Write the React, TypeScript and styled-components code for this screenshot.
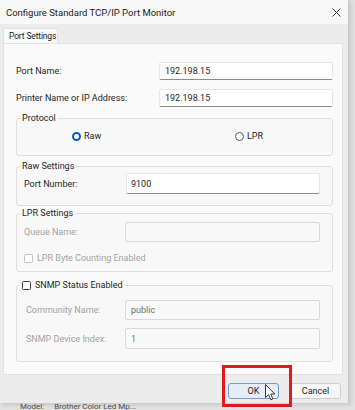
import React from 'react';
import styled, { createGlobalStyle } from 'styled-components';

const Global = createGlobalStyle`
  html, body { margin: 0; padding: 0; }
  body {
    background: #dedede;
    font-family: Roboto, "Liberation Sans", sans-serif;
    -webkit-font-smoothing: antialiased;
  }
`;

const Screen = styled.div`
  position: relative;
  width: 355px;
  height: 410px;
  overflow: hidden;
  background: #e2e2e2;
`;

const Dialog = styled.div`
  width: 349px;
  height: 403px;
  box-sizing: border-box;
  background: #ececec;
  border-right: 1px solid #c8c8c8;
  box-shadow: 2px 2px 4px rgba(0, 0, 0, 0.12);
  display: flex;
  flex-direction: column;
`;

const TitleBar = styled.div`
  height: 24px;
  flex: none;
  display: flex;
  align-items: center;
  justify-content: space-between;
  padding: 0 7px 0 6px;
  background: #f8f8f8;
  font-size: 9.5px;
  color: #1b1b1b;
`;

const CloseIcon = styled.svg`
  width: 9px;
  height: 9px;
  display: block;
`;

const Body = styled.div`
  flex: 1;
  display: flex;
  flex-direction: column;
  padding: 4px 5px 0 3px;
`;

const TabStrip = styled.div`
  height: 15px;
  flex: none;
  display: flex;
`;

const Tab = styled.div`
  width: 55px;
  box-sizing: border-box;
  background: #f9f9f9;
  border: 1px solid #e2e2e2;
  border-bottom: none;
  font-size: 8.5px;
  letter-spacing: -0.15px;
  white-space: nowrap;
  color: #1b1b1b;
  padding-left: 5px;
  display: flex;
  align-items: center;
`;

const Panel = styled.div`
  height: 332px;
  flex: none;
  box-sizing: border-box;
  background: #fafafa;
  border: 1px solid #e2e2e2;
  padding: 18px 9px 0 12px;
  display: flex;
  flex-direction: column;
`;

const Row = styled.div<{ $mt?: number; $indent?: number }>`
  display: flex;
  align-items: center;
  margin-top: ${(p) => p.$mt ?? 0}px;
  padding-left: ${(p) => p.$indent ?? 0}px;
`;

const Label = styled.span<{ $w: number; $disabled?: boolean }>`
  width: ${(p) => p.$w}px;
  flex: none;
  font-size: 9px;
  white-space: nowrap;
  color: ${(p) => (p.$disabled ? '#a3a3a3' : '#1e1e1e')};
`;

const Field = styled.div<{ $w: number; $h: number; $disabled?: boolean; $pad?: number }>`
  width: ${(p) => p.$w}px;
  height: ${(p) => p.$h}px;
  box-sizing: border-box;
  background: ${(p) => (p.$disabled ? '#f9f9f9' : '#ffffff')};
  border: 1px solid ${(p) => (p.$disabled ? '#d9d9d9' : '#e6e6e6')};
  border-bottom: 1px solid ${(p) => (p.$disabled ? '#d9d9d9' : '#8c8c8c')};
  border-radius: 2px;
  padding-left: ${(p) => p.$pad ?? 5}px;
  display: flex;
  align-items: center;
  font-size: 9px;
  color: ${(p) => (p.$disabled ? '#6f6f6f' : '#1e1e1e')};
`;

const Group = styled.fieldset<{ $mt: number; $pt: number; $pb: number }>`
  margin: ${(p) => p.$mt}px 0 0 0;
  padding: ${(p) => p.$pt}px 12px ${(p) => p.$pb}px 7px;
  border: 1px solid #dfdfdf;
  border-radius: 3px;
  background: #f8f8f8;
  min-width: 0;
`;

const Legend = styled.legend`
  margin-left: -4px;
  padding: 0 2px;
  font-size: 9px;
  line-height: 12px;
  color: #1e1e1e;
  display: flex;
  align-items: center;
  gap: 4px;
`;

const RadioRow = styled.div`
  display: grid;
  grid-template-columns: 163px 1fr;
  padding-left: 48px;
  height: 12px;
  align-items: center;
`;

const RadioOption = styled.div`
  display: flex;
  align-items: center;
  gap: 3px;
  font-size: 9px;
  color: #1e1e1e;
`;

const RadioDot = styled.span<{ $on?: boolean }>`
  width: 9px;
  height: 9px;
  box-sizing: border-box;
  border-radius: 50%;
  background: ${(p) => (p.$on ? '#ffffff' : '#fafafa')};
  border: ${(p) => (p.$on ? '2.5px solid #0a5cb8' : '1px solid #5a5a5a')};
`;

const CheckRow = styled.div<{ $mt?: number; $disabled?: boolean }>`
  display: flex;
  align-items: center;
  gap: 4px;
  margin-top: ${(p) => p.$mt ?? 0}px;
  height: 12px;
  font-size: 9px;
  color: ${(p) => (p.$disabled ? '#a3a3a3' : '#1e1e1e')};
`;

const Box = styled.span<{ $disabled?: boolean }>`
  width: 9px;
  height: 9px;
  box-sizing: border-box;
  border-radius: 1.5px;
  background: #ffffff;
  border: 1px solid ${(p) => (p.$disabled ? '#c4c4c4' : '#3c3c3c')};
`;

const Footer = styled.div`
  flex: 1;
  display: flex;
  justify-content: flex-end;
  align-items: flex-start;
  gap: 11px;
  padding: 8px 2px 0 0;
`;

const Button = styled.div<{ $primary?: boolean }>`
  width: 51px;
  height: 16px;
  box-sizing: border-box;
  border-radius: 3px;
  border: 1px solid ${(p) => (p.$primary ? '#6d9bd6' : '#cfcfcf')};
  background: ${(p) => (p.$primary ? '#e6edf6' : '#f7f7f7')};
  display: flex;
  align-items: center;
  justify-content: center;
  font-size: 9px;
  color: #1e1e1e;
`;

const Behind = styled.div`
  padding: 0 0 0 20px;
  font-size: 8px;
  line-height: 7px;
  color: #4a4a4a;
  display: flex;
  gap: 10px;
  white-space: nowrap;
`;

const Highlight = styled.div`
  position: absolute;
  left: 222px;
  top: 365px;
  width: 70px;
  height: 42px;
  box-sizing: border-box;
  border: 3px solid #e5161c;
  pointer-events: none;
`;

const Cursor = styled.svg`
  position: absolute;
  left: 265px;
  top: 384px;
  width: 11px;
  height: 17px;
`;

export default function App() {
  return (
    <Screen>
      <Global />
      <Dialog>
        <TitleBar>
          <span>Configure Standard TCP/IP Port Monitor</span>
          <CloseIcon viewBox="0 0 9 9">
            <path d="M0.5 0.5 L8.5 8.5 M8.5 0.5 L0.5 8.5" stroke="#333" strokeWidth="1" />
          </CloseIcon>
        </TitleBar>
        <Body>
          <TabStrip>
            <Tab>Port Settings</Tab>
          </TabStrip>
          <Panel>
            <Row>
              <Label $w={143}>Port Name:</Label>
              <Field $w={174} $h={18}>192.198.15</Field>
            </Row>
            <Row $mt={9}>
              <Label $w={143}>Printer Name or IP Address:</Label>
              <Field $w={174} $h={18}>192.198.15</Field>
            </Row>

            <Group $mt={5} $pt={6} $pb={13}>
              <Legend>Protocol</Legend>
              <RadioRow>
                <RadioOption>
                  <RadioDot $on />
                  Raw
                </RadioOption>
                <RadioOption>
                  <RadioDot />
                  LPR
                </RadioOption>
              </RadioRow>
            </Group>

            <Group $mt={4} $pt={1} $pb={11}>
              <Legend>Raw Settings</Legend>
              <Row>
                <Label $w={102}>Port Number:</Label>
                <Field $w={194} $h={21} $pad={4}>9100</Field>
              </Row>
            </Group>

            <Group $mt={1} $pt={3} $pb={7}>
              <Legend>LPR Settings</Legend>
              <Row>
                <Label $w={101} $disabled>Queue Name:</Label>
                <Field $w={196} $h={20} $disabled />
              </Row>
              <CheckRow $mt={10} $disabled>
                <Box $disabled />
                LPR Byte Counting Enabled
              </CheckRow>
            </Group>

            <Group $mt={7} $pt={9} $pb={12}>
              <Legend>
                <Box />
                SNMP Status Enabled
              </Legend>
              <Row $indent={2}>
                <Label $w={99} $disabled>Community Name:</Label>
                <Field $w={195} $h={20} $disabled>public</Field>
              </Row>
              <Row $mt={8} $indent={2}>
                <Label $w={99} $disabled>SNMP Device Index:</Label>
                <Field $w={195} $h={21} $disabled>1</Field>
              </Row>
            </Group>
          </Panel>
          <Footer>
            <Button $primary>OK</Button>
            <Button>Cancel</Button>
          </Footer>
        </Body>
      </Dialog>
      <Behind>
        <span>Model:</span>
        <span>Brother Color Led Mp...</span>
      </Behind>
      <Highlight />
      <Cursor viewBox="0 0 11 17">
        <path
          d="M0.5 0.5 L0.5 13.5 L3.6 10.7 L5.8 15.8 L7.8 14.9 L5.7 10 L9.8 10 Z"
          fill="#ffffff"
          stroke="#222"
          strokeWidth="0.9"
          strokeLinejoin="round"
        />
      </Cursor>
    </Screen>
  );
}
